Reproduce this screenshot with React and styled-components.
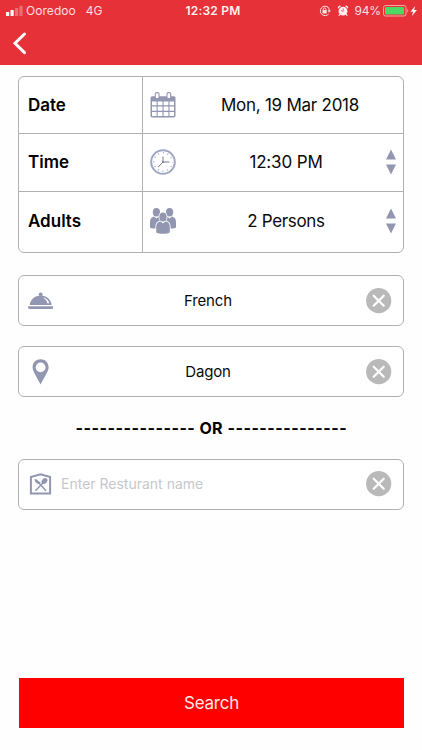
import React, { useState } from "react";
import styled, { createGlobalStyle, css } from "styled-components";

const GlobalStyle = createGlobalStyle`
    body {
        margin: 0;
        background-color: #fefefe;
        font-family: Inter, "Liberation Sans", sans-serif;
        color: #0a0a0a;
    }
    * {
        box-sizing: border-box;
    }
    svg {
        display: block;
        flex: none;
    }
`;

const Screen = styled.div`
    display: flex;
    flex-direction: column;
    width: 422px;
    height: 750px;
    overflow: hidden;
`;

// Style for the top of the screen
const Header = styled.header`
    height: 65px;
    flex: none;
    background-color: #e63139;
`;

const StatusBar = styled.div`
    display: grid;
    grid-template-columns: 1fr auto 1fr;
    height: 22px;
    padding: 0 4px 0 6px;
    align-items: center;
    color: #ffdfe1;
    font-size: 12px;
    line-height: 22px;
`;

const StatusGroup = styled.div`
    display: flex;
    align-items: center;
    ${(props) =>
        props.$end &&
        css`
            justify-content: flex-end;
        `};
`;

const Carrier = styled.span`
    margin-left: 2px;
    letter-spacing: 0.05px;
`;

const Network = styled.span`
    margin-left: 10px;
    letter-spacing: -0.1px;
`;

const Clock = styled.span`
    padding-left: 2px;
    font-weight: 600;
    letter-spacing: 0.2px;
    color: #fff0f0;
`;

const Percent = styled.span`
    margin: 0 2px 0 5px;
    letter-spacing: -0.15px;
`;

const BackButton = styled.button`
    display: block;
    border: none;
    background: none;
    padding: 9px 12px;
    cursor: pointer;
`;

// Style for the form
const Form = styled.form`
    display: flex;
    flex-direction: column;
    flex: 1;
    padding: 11px 18px 22px;
`;

const Card = styled.div`
    width: 386px;
    border: 1px solid #b0b0b2;
    border-radius: 6px;
    background-color: white;
`;

const Row = styled.div`
    display: flex;
    height: ${(props) => props.$height}px;
    & + & {
        border-top: 1px solid #b0b0b2;
    }
`;

const Label = styled.div`
    display: flex;
    align-items: center;
    width: 124px;
    padding: 0 0 ${(props) => props.$lift || 0}px 9px;
    border-right: 1px solid #b0b0b2;
    font-size: 17px;
    font-weight: 600;
    color: black;
`;

const Cell = styled.div`
    display: flex;
    flex: 1;
    align-items: center;
    padding: 0 6px ${(props) => props.$lift || 0}px 7px;
`;

const Value = styled.span`
    flex: 1;
    text-align: center;
    font-size: 17px;
    letter-spacing: ${(props) => props.$spacing || 0}px;
    padding-left: ${(props) => props.$shift || 0}px;
`;

const Stepper = styled.div`
    display: flex;
    flex-direction: column;
    gap: 4px;
`;

const Field = styled.div`
    display: flex;
    align-items: center;
    width: 386px;
    height: 51px;
    margin-top: ${(props) => props.$top}px;
    padding: 0 11px ${(props) => props.$lift || 0}px 9px;
    border: 1px solid #b0b0b2;
    border-radius: 6px;
    background-color: white;
`;

const FieldInput = styled.input`
    flex: 1;
    min-width: 0;
    padding: 0;
    border: none;
    outline: none;
    background: none;
    color: #0a0a0a;
    font-family: inherit;
    font-size: 15px;
    letter-spacing: -0.15px;
    padding-left: 7px;
    ${(props) =>
        props.$center &&
        css`
            text-align: center;
            padding: 0 4px 0 0;
        `};
    &::placeholder {
        color: #c7c7cc;
        opacity: 1;
        font-size: 14px;
        letter-spacing: 0;
    }
`;

const ClearButton = styled.button`
    border: none;
    background: none;
    padding: 0;
    cursor: pointer;
`;

const Divider = styled.div`
    display: flex;
    align-items: center;
    justify-content: center;
    height: 62px;
    gap: 5px;
    font-size: 16px;
    font-weight: 700;
    color: black;
`;

const Dashes = styled.span`
    width: 119px;
    letter-spacing: 0.5px;
    white-space: nowrap;
`;

const SearchButton = styled.button`
    width: 385px;
    height: 50px;
    margin: auto 0 0 1px;
    border: none;
    background-color: #ff0000;
    color: #ffe9e6;
    font-family: inherit;
    font-size: 17px;
    letter-spacing: -0.25px;
    cursor: pointer;
`;

const tint = "#9296b1";

function SignalIcon() {
    return (
        <svg width="18" height="12" viewBox="0 0 18 12" fill="#fff">
            <rect x="0" y="7" width="3.2" height="4" rx="0.6" />
            <rect x="4.5" y="5" width="3.2" height="6" rx="0.6" />
            <rect x="9" y="3" width="3.2" height="8" rx="0.6" opacity="0.3" />
            <rect x="13.4" y="0.8" width="3.2" height="10.2" rx="0.6" opacity="0.3" />
        </svg>
    );
}

function RotationLockIcon() {
    return (
        <svg width="12" height="12" viewBox="0 0 12 12" fill="none" stroke="#ffe3e4">
            <path d="M9.2 2.4A4.7 4.7 0 1 0 9.6 9" />
            <path d="M8.6 1.8a4.7 4.7 0 0 1 1.6 4" />
            <path d="M8.5 5.4h3.4L10.2 7.6z" fill="#ffe3e4" stroke="none" />
            <path d="M4.3 5.3V4.2a1.3 1.3 0 0 1 2.6 0v1.1" strokeWidth="0.9" />
            <rect x="3.5" y="5" width="4.2" height="3.4" rx="0.4" fill="#ffe3e4" stroke="none" />
        </svg>
    );
}

function AlarmIcon() {
    return (
        <svg width="12" height="12" viewBox="0 0 12 12" fill="#fff0f0">
            <circle cx="6" cy="6.2" r="4.4" />
            <path d="M1 3.8A2.2 2.2 0 0 1 4 .9zM11 3.8A2.2 2.2 0 0 0 8 .9z" />
            <path d="M2.8 9.2l-1 1.6M9.2 9.2l1 1.6" stroke="#fff0f0" strokeWidth="1.2" />
            <path d="M6.2 3.4v3L4.200 5.600" fill="none" stroke="#e63139" strokeWidth="0.7" />
        </svg>
    );
}

function BatteryIcon() {
    return (
        <svg width="26" height="12" viewBox="0 0 26 12">
            <rect x="0.5" y="0.5" width="22.5" height="10.5" rx="2" fill="none" stroke="#f6a8a5" />
            <rect x="2" y="2" width="19" height="7.5" rx="0.8" fill="#4bd964" />
            <path d="M24.3 4v3.6c1.3-.4 1.3-3.2 0-3.6z" fill="#f6a8a5" />
        </svg>
    );
}

function BoltIcon() {
    return (
        <svg width="9" height="12" viewBox="0 0 9 12" fill="#fff">
            <path d="M6.2 1L1.500 6.700h2.600L2.900 11 8 5H5.100z" />
        </svg>
    );
}

function CalendarIcon() {
    return (
        <svg width="26" height="26" viewBox="0 0 26 26">
            <path
                d="M2 4.3h22q1.5 0 1.5 1.5v18q0 1.7-1.7 1.7H2.2Q.5 25.5.5 23.8V5.8Q.5 4.3 2 4.3z"
                fill={tint}
            />
            <g fill="white">
                <path d="M2 9.5h4.6v3.8H2zM7.7 9.5h4.8v3.8H7.7zM13.6 9.5h4.8v3.8h-4.800zM19.5 9.5H24v3.8h-4.5z" />
                <path d="M2 14.5h4.6v4.2H2zM7.7 14.5h4.8v4.2H7.7zM13.6 14.5h4.8v4.2h-4.800zM19.5 14.5H24v4.2h-4.5z" />
                <path d="M2 19.9h4.6v4.2H2zM7.7 19.9h4.8v4.2H7.7zM13.6 19.9h4.8v4.2h-4.800zM19.5 19.9H24v4.2h-4.5z" />
            </g>
            <g fill="white" stroke={tint} strokeWidth="1.1">
                <rect x="5.3" y="0.6" width="3.7" height="6" rx="1.4" />
                <rect x="17" y="0.6" width="3.7" height="6" rx="1.4" />
            </g>
        </svg>
    );
}

function ClockIcon() {
    return (
        <svg width="26" height="26" viewBox="0 0 26 26" fill="none">
            <circle cx="13" cy="13" r="11.8" stroke="#a0a6c4" strokeWidth="2" />
            <circle
                cx="13"
                cy="13"
                r="9.2"
                stroke={tint}
                strokeWidth="1.5"
                strokeDasharray="0.8 4.017"
                strokeDashoffset="0.4"
            />
            <path d="M13 7.5v5.5h6.5M13 13l-4.8 5" stroke="#767a90" strokeWidth="1" />
            <circle cx="13" cy="13" r="1" fill="#767a90" />
        </svg>
    );
}

function PeopleIcon() {
    return (
        <svg width="26" height="26" viewBox="0 0 26 26" fill={tint}>
            <ellipse cx="6.4" cy="4.2" rx="3.6" ry="4.2" />
            <ellipse cx="19.6" cy="4.2" rx="3.6" ry="4.2" />
            <path d="M0 19.500v-5.500c0-3 1.500-4.800 4-5.400l2.400 2 2.400-2L11 12v8.500H3.500Q1 20.500 0 19.500z" />
            <path d="M26 19.500v-5.500c0-3-1.500-4.800-4-5.400l-2.400 2-2.400-2L15 12v8.500h7.500q2.500 0 3.500-1z" />
            <g stroke="white" strokeWidth="1.6" paintOrder="stroke">
                <path d="M6.200 24.400v-5.700c0-3 1.600-4.900 4.300-5.500l2.500 2.400 2.500-2.400c2.700.6 4.300 2.500 4.300 5.500v5.700C17.500 26.300 8.500 26.300 6.200 24.400z" />
                <ellipse cx="13" cy="9" rx="3.7" ry="4.500" />
            </g>
        </svg>
    );
}

function DishIcon() {
    return (
        <svg width="26" height="26" viewBox="0 0 26 26" fill={tint}>
            <circle cx="12.700" cy="6.3" r="1.9" />
            <path d="M1.600 16.900C2.400 11.500 6.800 7.500 12.700 7.500s10.200 4 11 9.400z" />
            <path d="M15.800 9.600c3 .9 4.800 3 5.400 5.700l-1.800-.1c-.6-2.300-1.900-4.200-4-5.200z" fill="white" />
            <path d="M.1 18.300h25v1.200q0 1.600-1.600 1.600H1.700q-1.600 0-1.600-1.600z" />
        </svg>
    );
}

function PinIcon() {
    return (
        <svg width="26" height="26" viewBox="0 0 26 26" fill={tint}>
            <path
                fillRule="evenodd"
                d="M12.600 .3c4.600 0 8 3.400 8 7.900 0 4.300-4.200 9.500-8 17.400C8.800 17.700 4.600 12.500 4.600 8.200 4.600 3.700 8 .3 12.600 .3zm0 3.200a4.900 4.900 0 1 0 0 9.800 4.900 4.900 0 0 0 0-9.800z"
            />
        </svg>
    );
}

function RestaurantIcon() {
    return (
        <svg width="26" height="26" viewBox="0 0 26 26" fill="none" stroke={tint}>
            <path d="M2.900 6l9.600-2.700L22.100 6v16.600H2.900z" strokeWidth="2" />
            <path d="M8 8.800l9.900 11M17.500 9.200L7.400 19.800" strokeWidth="1.500" />
            <path d="M6.500 7.500q.2 5.200 4.600 5.500l1.500-1.500z" fill={tint} stroke="none" />
            <ellipse cx="16.500" cy="10" rx="2.500" ry="3.300" transform="rotate(43 16.500 10)" fill={tint} stroke="none" />
        </svg>
    );
}

function ClearIcon() {
    return (
        <svg width="26" height="26" viewBox="0 0 26 26">
            <circle cx="12.700" cy="12.700" r="12.600" fill="#b9b9b9" />
            <path d="M7.700 7.700l10 10M17.700 7.700l-10 10" stroke="white" strokeWidth="2.200" strokeLinecap="round" />
        </svg>
    );
}

function Arrows() {
    return (
        <Stepper>
            <svg width="12" height="11" viewBox="0 0 12 11" fill={tint}>
                <path d="M6 .5L11 10.600H1z" />
            </svg>
            <svg width="12" height="11" viewBox="0 0 12 11" fill={tint}>
                <path d="M6 10.500L11 .4H1z" />
            </svg>
        </Stepper>
    );
}

function SearchField({ icon, top, lift, value, placeholder, center }) {
    const [text, setText] = useState(value || "");

    return (
        <Field $top={top} $lift={lift}>
            {icon}
            <FieldInput
                $center={center}
                value={text}
                placeholder={placeholder}
                onChange={(e) => setText(e.target.value)}
            />
            <ClearButton type="button" onClick={() => setText("")}>
                <ClearIcon />
            </ClearButton>
        </Field>
    );
}

function App() {
    return (
        <Screen>
            <GlobalStyle />
            <Header>
                <StatusBar>
                    <StatusGroup>
                        <SignalIcon />
                        <Carrier>Ooredoo</Carrier>
                        <Network>4G</Network>
                    </StatusGroup>
                    <Clock>12:32 PM</Clock>
                    <StatusGroup $end>
                        <RotationLockIcon />
                        <svg width="6" height="1" />
                        <AlarmIcon />
                        <Percent>94%</Percent>
                        <BatteryIcon />
                        <BoltIcon />
                    </StatusGroup>
                </StatusBar>
                <BackButton type="button">
                    <svg width="15" height="24" viewBox="0 0 15 24" fill="none">
                        <path d="M12.5 3L3 12.3l9.5 9.3" stroke="white" strokeWidth="3" strokeLinecap="round" />
                    </svg>
                </BackButton>
            </Header>
            <Form onSubmit={(e) => e.preventDefault()}>
                <Card>
                    <Row $height={56}>
                        <Label>Date</Label>
                        <Cell>
                            <CalendarIcon />
                            <Value $shift={7} $spacing={-0.25}>
                                Mon, 19 Mar 2018
                            </Value>
                        </Cell>
                    </Row>
                    <Row $height={58}>
                        <Label $lift={1}>Time</Label>
                        <Cell $lift={1}>
                            <ClockIcon />
                            <Value $shift={11} $spacing={-0.15}>
                                12:30 PM
                            </Value>
                            <Arrows />
                        </Cell>
                    </Row>
                    <Row $height={61}>
                        <Label $lift={2}>Adults</Label>
                        <Cell $lift={3}>
                            <PeopleIcon />
                            <Value $shift={11} $spacing={-0.35}>
                                2 Persons
                            </Value>
                            <Arrows />
                        </Cell>
                    </Row>
                </Card>
                <SearchField icon={<DishIcon />} top={22} value="French" center />
                <SearchField icon={<PinIcon />} top={20} value="Dagon" center />
                <Divider>
                    <Dashes>---------------</Dashes>
                    <span>OR</span>
                    <Dashes>---------------</Dashes>
                </Divider>
                <SearchField icon={<RestaurantIcon />} top={0} lift={2} placeholder="Enter Resturant name" />
                <SearchButton type="submit">Search</SearchButton>
            </Form>
        </Screen>
    );
}

export default App;
